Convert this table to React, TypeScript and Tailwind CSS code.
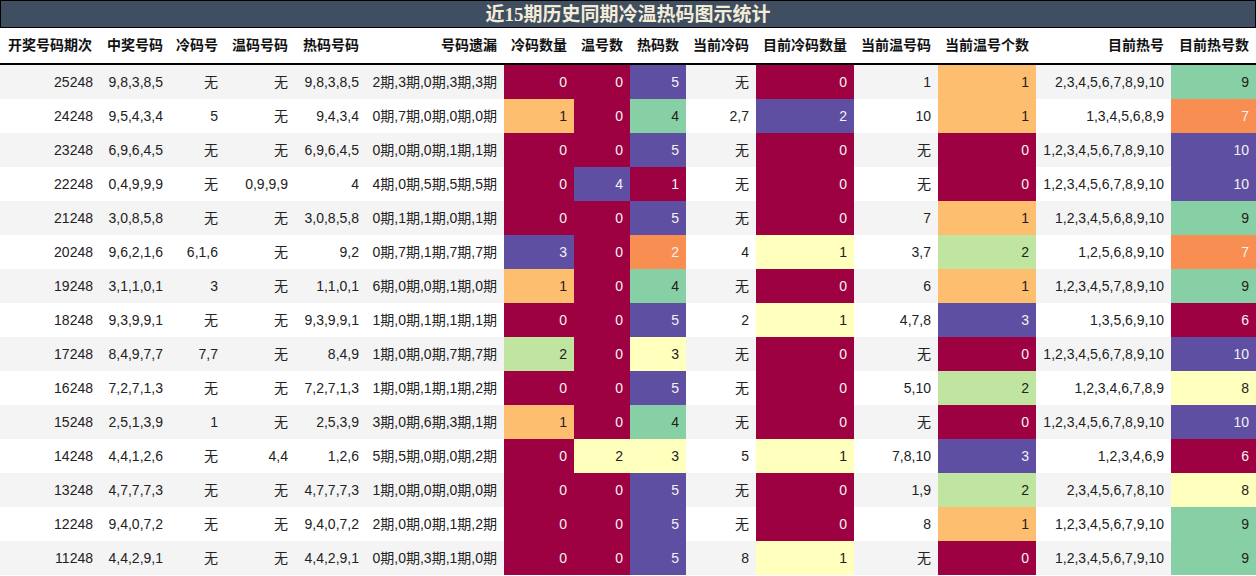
const MAROON = 'bg-[#9e0142] text-[#f2f2f2]';
const PURPLE = 'bg-[#5e4fa2] text-[#f2f2f2]';
const DORANGE = 'bg-[#f98e52] text-[#f2f2f2]';
const LORANGE = 'bg-[#fdbe6f] text-[#222]';
const YELLOW = 'bg-[#ffffbe] text-[#222]';
const LGREEN = 'bg-[#bfe5a0] text-[#222]';
const GREEN = 'bg-[#87cfa4] text-[#222]';

// colour scale per column, by value
const coldCount: Record<string, string> = { '0': MAROON, '1': LORANGE, '2': LGREEN, '3': PURPLE };
const warmCount: Record<string, string> = { '0': MAROON, '2': YELLOW, '4': PURPLE };
const hotCount: Record<string, string> = { '1': MAROON, '2': DORANGE, '3': YELLOW, '4': GREEN, '5': PURPLE };
const curCold: Record<string, string> = { '0': MAROON, '1': YELLOW, '2': PURPLE };
const curWarm: Record<string, string> = { '0': MAROON, '1': LORANGE, '2': LGREEN, '3': PURPLE };
const curHot: Record<string, string> = { '6': MAROON, '7': DORANGE, '8': YELLOW, '9': GREEN, '10': PURPLE };

const headers = [
  '开奖号码期次', '中奖号码', '冷码号', '温码号码', '热码号码', '号码遗漏', '冷码数量', '温号数',
  '热码数', '当前冷码', '目前冷码数量', '当前温号码', '当前温号个数', '目前热号', '目前热号数',
];

const rows = [
  ['25248', '9,8,3,8,5', '无', '无', '9,8,3,8,5', '2期,3期,0期,3期,3期', '0', '0', '5', '无', '0', '1', '1', '2,3,4,5,6,7,8,9,10', '9'],
  ['24248', '9,5,4,3,4', '5', '无', '9,4,3,4', '0期,7期,0期,0期,0期', '1', '0', '4', '2,7', '2', '10', '1', '1,3,4,5,6,8,9', '7'],
  ['23248', '6,9,6,4,5', '无', '无', '6,9,6,4,5', '0期,0期,0期,1期,1期', '0', '0', '5', '无', '0', '无', '0', '1,2,3,4,5,6,7,8,9,10', '10'],
  ['22248', '0,4,9,9,9', '无', '0,9,9,9', '4', '4期,0期,5期,5期,5期', '0', '4', '1', '无', '0', '无', '0', '1,2,3,4,5,6,7,8,9,10', '10'],
  ['21248', '3,0,8,5,8', '无', '无', '3,0,8,5,8', '0期,1期,1期,0期,1期', '0', '0', '5', '无', '0', '7', '1', '1,2,3,4,5,6,8,9,10', '9'],
  ['20248', '9,6,2,1,6', '6,1,6', '无', '9,2', '0期,7期,1期,7期,7期', '3', '0', '2', '4', '1', '3,7', '2', '1,2,5,6,8,9,10', '7'],
  ['19248', '3,1,1,0,1', '3', '无', '1,1,0,1', '6期,0期,0期,1期,0期', '1', '0', '4', '无', '0', '6', '1', '1,2,3,4,5,7,8,9,10', '9'],
  ['18248', '9,3,9,9,1', '无', '无', '9,3,9,9,1', '1期,0期,1期,1期,1期', '0', '0', '5', '2', '1', '4,7,8', '3', '1,3,5,6,9,10', '6'],
  ['17248', '8,4,9,7,7', '7,7', '无', '8,4,9', '1期,0期,0期,7期,7期', '2', '0', '3', '无', '0', '无', '0', '1,2,3,4,5,6,7,8,9,10', '10'],
  ['16248', '7,2,7,1,3', '无', '无', '7,2,7,1,3', '1期,0期,1期,1期,2期', '0', '0', '5', '无', '0', '5,10', '2', '1,2,3,4,6,7,8,9', '8'],
  ['15248', '2,5,1,3,9', '1', '无', '2,5,3,9', '3期,0期,6期,3期,1期', '1', '0', '4', '无', '0', '无', '0', '1,2,3,4,5,6,7,8,9,10', '10'],
  ['14248', '4,4,1,2,6', '无', '4,4', '1,2,6', '5期,5期,0期,0期,2期', '0', '2', '3', '5', '1', '7,8,10', '3', '1,2,3,4,6,9', '6'],
  ['13248', '4,7,7,7,3', '无', '无', '4,7,7,7,3', '1期,0期,0期,0期,0期', '0', '0', '5', '无', '0', '1,9', '2', '2,3,4,5,6,7,8,10', '8'],
  ['12248', '9,4,0,7,2', '无', '无', '9,4,0,7,2', '2期,0期,0期,1期,2期', '0', '0', '5', '无', '0', '8', '1', '1,2,3,4,5,6,7,9,10', '9'],
  ['11248', '4,4,2,9,1', '无', '无', '4,4,2,9,1', '0期,0期,3期,1期,0期', '0', '0', '5', '8', '1', '无', '0', '1,2,3,4,5,6,7,9,10', '9'],
];

// which columns get a colour scale
const scales: Record<number, Record<string, string>> = {
  6: coldCount,
  7: warmCount,
  8: hotCount,
  10: curCold,
  12: curWarm,
  14: curHot,
};

const gridCols = 'grid grid-cols-[100px_70px_55px_70px_71px_138px_70px_56px_56px_70px_98px_84px_98px_135px_85px]';

export default function App() {
  return (
    <div className="w-[1256px] h-[576px] bg-white overflow-hidden font-['Liberation_Sans','Noto_Sans_CJK_SC',sans-serif] text-[14px]">
      <div className="h-[28px] border border-black bg-[#404e62] flex items-center justify-center">
        <span className="font-['Liberation_Serif','Noto_Sans_CJK_SC',serif] font-bold text-[19px] text-[#f3ecd6] leading-none">
          近15期历史同期冷温热码图示统计
        </span>
      </div>

      <div className={`${gridCols} h-[37px] border-b-2 border-black bg-white`}>
        {headers.map((h, i) => (
          <div key={i} className={`flex items-center justify-end pr-[7px] font-bold text-[#111] whitespace-nowrap ${i === 0 ? 'pl-[8px] justify-start' : ''}`}>
            {h}
          </div>
        ))}
      </div>

      {rows.map((row, r) => (
        <div key={r} className={`${gridCols} h-[34px] ${r % 2 === 0 ? 'bg-[#f4f4f4]' : 'bg-white'}`}>
          {row.map((cell, c) => {
            const scale = scales[c];
            const color = scale ? scale[cell] : 'text-[#222]';
            return (
              <div key={c} className={`flex items-center justify-end pr-[7px] whitespace-nowrap ${color}`}>
                {cell}
              </div>
            );
          })}
        </div>
      ))}
    </div>
  );
}
